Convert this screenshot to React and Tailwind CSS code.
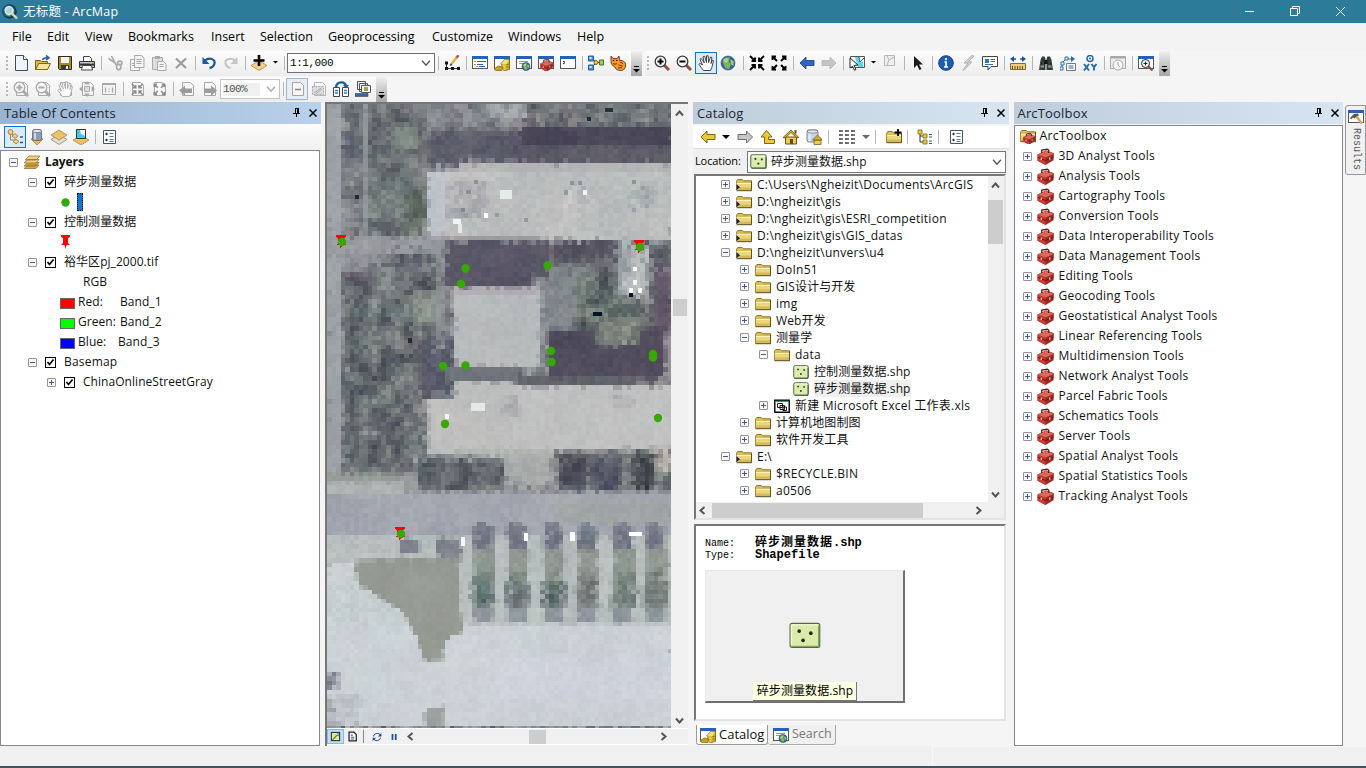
import React from 'react';

/* ---------- icons, all on a 16 x 16 grid ---------- */
const G = '#a9a9a9';
const win = (
  <>
    <rect x=".5" y="1.5" width="15" height="12" fill="#fff" stroke="#555" />
    <rect x="0" y="1" width="16" height="3" fill="#2463b4" />
  </>
);
const globe = (cx, cy, r) => (
  <>
    <circle cx={cx} cy={cy} r={r} fill="#2b66b5" stroke="#27456b" strokeWidth=".6" />
    <path d={`M${cx - r * 0.8} ${cy - r * 0.3}q${r * 0.5} ${-r * 0.6} ${r * 1.1} ${-r * 0.5}l${-r * 0.2} ${r * 0.6}l${r * 0.3} ${r * 0.5}l${-r * 0.3} ${r * 0.6}l${-r * 0.5} ${-r * 0.2}z`} fill="#83b54a" />
    <path d={`M${cx + r * 0.3} ${cy - r * 0.5}l${r * 0.5} ${r * 0.2}v${r * 0.7}l${-r * 0.4} ${-r * 0.2}z`} fill="#a6cc5c" />
    <circle cx={cx - r * 0.3} cy={cy - r * 0.4} r={r * 0.35} fill="#fff" fillOpacity=".35" />
  </>
);
const mag = (sign, c, h) => (
  <>
    <path d="M10 10l5 5" stroke={h} strokeWidth="3" />
    <circle cx="6.5" cy="6.5" r="5.300" fill="#f8f8f8" stroke={c} strokeWidth="1.3" />
    <path d={sign} stroke={c === G ? G : '#000'} strokeWidth="2" />
  </>
);
const PLUS = 'M3.5 6.5h6M6.5 3.5v6';
const MINUS = 'M3.5 6.5h6';
const hand = (c) => (
  <path d="M5.500 15.500L1 9.500l.8-1.200L4.500 10 2 4.300l1.300-.8L6.300 8 5 1.800 6.700 1.300 8.500 7.500V.8h1.700l.4 6.700L12.500 2l1.400.5L13 8.500l1.200-3.300 1.300.5-1.700 6.800-1.300 3z" fill="#fff" stroke={c} strokeWidth=".9" />
);
const arrowsIn = (c) => (
  <path d="M1 1l4 4M15 1l-4 4M1 15l4-4M15 15l-4-4M6 2.500v3.500H2.500M10 2.500v3.500h3.500M6 13.500v-3.500H2.500M10 13.500v-3.500h3.500" stroke={c} strokeWidth="1.9" fill="none" />
);
const arrowsOut = (c) => (
  <path d="M2 2l4 4M14 2l-4 4M2 14l4-4M14 14l-4-4M1.500 5V1.500H5M11 1.500h3.500V5M1.500 11v3.500H5M11 14.500h3.500V11" stroke={c} strokeWidth="1.9" fill="none" />
);
const page = (c) => <path d="M3.5 1.5h8l3 3v10h-11z" fill="#f8f8f8" stroke={c} />;
const toolbox = (
  <>
    <path d="M.5 6l8-4 7.500 3-.5 6.500L8 16l-7.500-4z" fill="#a32a24" />
    <path d="M.5 6l8-3.500L16 5.500 8 9z" fill="#d9695c" />
    <path d="M.5 6L8 9v7l-7.500-4z" fill="#c93d33" />
    <path d="M4.5 4.800V2l5-1 1.500 1v2.800" stroke="#571d19" fill="none" strokeWidth="1.2" />
    <path d="M.8 8.700l7.200 3 7.500-3" stroke="#701b17" fill="none" />
    <path d="M4 9.2v2M12 9v2" stroke="#eee" />
  </>
);
const folder = (
  <>
    <path d="M.5 12.500V4.300l1.300-1.800h4.500l1.200 1.300h8v8.700z" fill="#d9bd5c" stroke="#8f7620" />
    <path d="M.5 6h15v7H.5z" fill="#e9d67d" />
    <path d="M1 6.500h14" stroke="#fdf3bb" />
    <path d="M1 10.500h14v2.500H1z" fill="#d8ba55" />
    <path d="M.5 5v8.500" stroke="#a98d2e" />
    <path d="M.5 13.700h15.200V4.500" stroke="#4d4014" fill="none" />
  </>
);
const shp = (
  <>
    <rect x=".7" y="1.7" width="14.6" height="12.4" rx="1.6" fill="#dcecae" stroke="#5a7047" />
    <path d="M2 3h12" stroke="#f5fbdd" />
    <path d="M1.5 14.4h13.5V4" stroke="#3d5133" fill="none" strokeWidth=".8" />
    <path d="M4.3 5.5h1.6M10.3 6h1.6M7 10h1.7" stroke="#1b2a10" strokeWidth="1.6" />
  </>
);
const diamond = (y, c) => <path d={`M0 ${y}l8-5 8 5-8 5z`} fill={c} stroke="#a07c3c" strokeWidth=".7" />;
const cyl = (x, y, w, h, c) => (
  <>
    <rect x={x} y={y} width={w} height={h} rx="2" fill={c} stroke="#556" strokeWidth=".7" />
    <path d={`M${x + 2.5} ${y + 3}v${h - 4}`} stroke="#fff" strokeOpacity=".6" strokeWidth="2" />
    <ellipse cx={x + w / 2} cy={y + 1.5} rx={w / 2} ry="1.6" fill="#e8edf4" stroke="#556" strokeWidth=".6" />
  </>
);
const catalogWin = (
  <>
    {win}
    <path d="M7 8.500l4-4.500 4.500 1v9.500l-5.500 1.500z" fill="#d4ae22" stroke="#7a6412" strokeWidth=".7" />
    <path d="M7.500 8.500l3.500-4 4 1-3 4z" fill="#f6e27a" />
    <path d="M8 9.500l3.500.800v4.500l-2 .5z" fill="#e8cc4a" />
    <path d="M0 14l4-3 5 1-1 3.500H2z" fill="#c8a21f" stroke="#7a6412" strokeWidth=".7" />
    <path d="M12.500 9.500h2M12.500 12h2" stroke="#7a6412" strokeWidth=".8" />
  </>
);
const searchWin = (
  <>
    {win}
    <path d="M3 6.5h9M3 8.5h6" stroke="#8a9ab5" />
    {globe(10, 11.5, 4)}
  </>
);

const ICONS = {
  app: (<><circle cx="7.5" cy="7.5" r="7.2" fill="#17324a" />{globe(7, 7, 6)}<circle cx="7" cy="6.5" r="4" fill="#b6e3f0" fillOpacity=".75" stroke="#ecf5f8" /><path d="M10 9.5l5 5" stroke="#e6dcb4" strokeWidth="2.4" /></>),
  new: (<><path d="M2.5.5h8l4 4v11h-12z" fill="#eff5fd" stroke="#3f4b5c" /><path d="M10.5.5v4h4" fill="#fff" stroke="#3f4b5c" /></>),
  open: (<><path d="M.5 14.5v-9h5l1 1h6v8z" fill="#d9b84b" stroke="#7d641a" /><path d="M.7 14.5l3-6H15.5l-3 6z" fill="#f5e498" stroke="#7d641a" /><path d="M7.5 5c1-2.500 3-2.500 5-2.300M11 .5l3 2.300-3 2.200" stroke="#1f5c93" strokeWidth="1.5" fill="none" /></>),
  save: (<><path d="M1.500 1.500h13v13h-12l-1-1z" fill="#a58a2c" stroke="#2b2a20" /><path d="M4 2h8v6H4z" fill="#f3f3f3" /><path d="M4 10h8v5H4z" fill="#3a3a3a" /><path d="M9 11h2v3H9z" fill="#eee" /></>),
  print: (<><path d="M4.500 6V1.500h6l2 2V6" fill="#fff" stroke="#444" /><path d="M.5 6.500h15v6H.5z" fill="#c2c8cf" stroke="#333" /><path d="M1 9.500h14" stroke="#333" strokeWidth="2" /><path d="M3.500 10.500h9l1 4.500h-11z" fill="#fff" stroke="#444" /><path d="M11 8h2" stroke="#d6c634" strokeWidth="1.500" /></>),
  cut: <path d="M4.500 1l4.500 9M1.500 3.500L9 8.500M9.500 12a2 2.300 0 1 0 4.500 0a2 2.300 0 1 0-4.500 0M10.500 8a1.800 1.500 0 1 0 4.500 0a1.800 1.500 0 1 0-4.500 0" stroke={G} strokeWidth="1.600" fill="none" />,
  copy: (<><path d="M1.500 4.500h7l2 2v9h-9z" fill="#f4f4f4" stroke={G} /><path d="M5.500.5h7l2.500 2.500v9.500H5.500z" fill="#f4f4f4" stroke={G} /><path d="M7.500 4.500h5M7.500 6.500h5M7.500 8.500h5M3 8.500h2M3 10.500h2" stroke={G} /></>),
  paste: (<><path d="M1.500 2.500h10v12h-10z" fill="#ddd" stroke={G} /><path d="M4 1h5v3H4z" fill={G} /><path d="M6.500 6.500h6l2.500 2.500v6.500H6.500z" fill="#f4f4f4" stroke={G} /><path d="M8.500 9.500h4M8.500 11.500h4" stroke={G} /></>),
  del: <path d="M3 3.500l10 9.500M13 3.500L3 13" stroke="#9e9e9e" strokeWidth="2.400" />,
  undo: (<><path d="M4 5.500C8 2 14.500 4 13.500 8.500c-.6 2.500-2.500 4-5 4.500" fill="none" stroke="#22589a" strokeWidth="2.300" /><path d="M1.500 2v7h7z" fill="#22589a" /></>),
  redo: (<><path d="M12 5.500C8 2 1.500 4 2.500 8.500c.6 2.500 2.500 4 5 4.500" fill="none" stroke="#c4c4c4" strokeWidth="2" /><path d="M14.500 2v7h-7z" fill="#c4c4c4" /></>),
  add: (<>{diamond(10.5, '#f0cf87')}<path d="M8 0v11M2.500 5.500h11" stroke="#000" strokeWidth="2.600" /></>),
  edit: (<><path d="M2 13.500h12M2.500 8l0 5" stroke="#333" /><path d="M1 6.500h3v3H1zM1 12h3v3H1zM7 12h3v3H7zM13 12h3v3h-3z" fill="#111" /><path d="M7 9.500l6-7.500" stroke="#dfb546" strokeWidth="2.600" /><path d="M12.500 2.700l2-2.500" stroke="#c4524a" strokeWidth="2.600" /><path d="M6.300 10.500l1.200-1.500" stroke="#333" strokeWidth="1.500" /></>),
  tocw: (<>{win}<path d="M2 6.500h2M2 9.500h2M4 11.500h2" stroke="#c88b28" /><path d="M5 6.500h9M5 9.500h6M7 11.500h6" stroke="#2463b4" /></>),
  catw: catalogWin,
  srchw: searchWin,
  toolw: (<>{win}<g transform="translate(2 3.500) scale(.82)">{toolbox}</g></>),
  pyw: (<>{win}<path d="M3 6l2 1.500L3 9" stroke="#111" fill="none" /></>),
  model: (<><path d="M3 3l5 4M3 13l5-5M10 7.500h2" stroke="#222" /><path d="M.5 1h5v5h-5zM.5 10h5v5h-5z" fill="#4b91d4" stroke="#245d9b" /><path d="M1.500 2h2v2h-2zM1.500 11h2v2h-2z" fill="#dcecfa" /><circle cx="8" cy="7.500" r="2" fill="#ecc83c" stroke="#76641f" /><path d="M11.500 5h4v5h-4z" fill="#a3c863" stroke="#4b6f23" /></>),
  cat: (<><path d="M1 1l2 2.500h4L9 1l.8 4.500C14 5 16 8 15.500 11c0 2.500-2 4.500-5 4.500S5.500 14.500 5 12C2.500 11 1 9 1 6z" fill="#f6982a" stroke="#6d3305" strokeWidth=".9" /><path d="M10 7l3 1.500M8.500 10l4 1M8 13l4-.5M3 8.500q2 1.500 4 0" stroke="#6d3305" fill="none" /><path d="M2.800 5.500h1.500M6 5.500h1.500" stroke="#200" /></>),
  zin: mag(PLUS, '#3b3b3b', '#934c3a'),
  zout: mag(MINUS, '#3b3b3b', '#934c3a'),
  hand: hand('#333'),
  globe: globe(8, 8, 7),
  fin: arrowsIn('#000'),
  fout: arrowsOut('#000'),
  back: <path d="M1 8l6-6v3.500h8v5H7V14z" fill="#2d63cc" stroke="#193c83" strokeWidth=".8" />,
  fwd: <path d="M15 8L9 2v3.500H1v5h8V14z" fill="#c5c5c5" stroke="#b2b2b2" strokeWidth=".8" />,
  selF: (<><path d="M1.500 1.500h14v11h-14z" fill="#fff" stroke="#555" /><path d="M6 2h4l1 4 3 1v5H9L7 6z" fill="#57d8ec" /><path d="M10 2l1 5 4-4" stroke="#555" fill="none" /><path d="M1 3l8 7-4 .5 2 4-1.500.800-2-4L1 13z" fill="#fff" stroke="#111" strokeWidth=".9" /></>),
  clr: (<><path d="M2.500.5h10v10h-10z" fill="#f0f0f0" stroke="#b8b8b8" /><path d="M5 1l2 4-2 5M7 5l5-3" stroke="#b8b8b8" fill="none" /></>),
  ptr: <path d="M4 1v12l3-3 2.500 5 2-1L9 9.500h4z" fill="#1c1c1c" />,
  info: (<><circle cx="8" cy="8" r="7.300" fill="#1f5db5" stroke="#143d7d" /><path d="M8 3v2.200M6.500 7H8v5M6 12h4" stroke="#fff" strokeWidth="1.700" fill="none" /></>),
  bolt: <path d="M12 .5L4 8h4l-5 7.500L12 7H8l6-6z" fill="#d4d4d4" stroke="#b0b0b0" />,
  popup: (<><path d="M.5 1.500h15v10H9L6 15v-3.500H.5z" fill="#fff" stroke="#444" /><path d="M3 4h4v4H3z" fill="#2c78bd" /><path d="M8.500 4.500H13M8.500 6.500H13M3 9.500h8" stroke="#2c78bd" /></>),
  meas: (<><path d="M0 4l4-3v2.300h2v1.400H4V7zM16 4l-4-3v2.300h-2v1.400h2V7z" fill="#1b5599" /><path d="M.5 8.500h15v6H.5z" fill="#efcb84" stroke="#8b6a2d" /><path d="M2.500 11v3M5 11v3M7.500 11v3M10 11v3M12.500 11v3" stroke="#6b4d18" /></>),
  bino: (<><path d="M1 15L2.500 5 4 1.500h2.500L7.500 4v11zM15 15L13.500 5 12 1.500H9.500L8.500 4v11z" fill="#343a38" /><path d="M6.500 5h3v4h-3z" fill="#111" /><path d="M2.500 11.500h3.500M10 11.500h3.500" stroke="#829c91" strokeWidth="2" /></>),
  route: (<><path d="M2 13V8l4-4h6" stroke="#2a6ca8" fill="none" /><path d="M11 1l4 3-4 3z" fill="#2a6ca8" /><path d="M1 7h3v3H1zM0 12h3v3H0zM5 2h3v3H5z" fill="#fff" stroke="#2a6ca8" /><path d="M6.500 8.500h9v7h-9z" fill="#fff" stroke="#777" /><path d="M8.500 11h5M8.500 13h5" stroke="#2a6ca8" /></>),
  xy: (<><circle cx="8" cy="3.500" r="3" fill="none" stroke="#2369a8" strokeWidth="1.500" /><circle cx="8" cy="3.500" r="1" fill="#2369a8" /><path d="M2 9l5 6.500M7 9l-5 6.500M9.500 9l2.500 3.300L14.500 9M12 12v3.500" stroke="#2369a8" strokeWidth="1.900" fill="none" /></>),
  time: (<><path d="M.5 1.500h15v12H.5z" fill="#eee" stroke={G} /><path d="M1 2.500h14" stroke={G} strokeWidth="2" /><circle cx="8" cy="10" r="5" fill="#f5f5f5" stroke={G} /><path d="M8 7v3l2 2" stroke={G} fill="none" /></>),
  viewer: (<>{win}<path d="M10 11l4.500 4.500" stroke="#934c3a" strokeWidth="2.200" /><circle cx="7.500" cy="8.500" r="4" fill="#fff" stroke="#222" /><path d="M5.500 8.500h4M7.500 6.500v4" stroke="#222" /></>),
  pzin: (<>{page(G)}{mag(PLUS, G, G)}</>),
  pzout: (<>{page(G)}{mag(MINUS, G, G)}</>),
  phand: (<>{page(G)}{hand(G)}</>),
  pfull: (<>{page(G)}<path d="M5.500 5.500h5v5h-5z" fill="#ddd" stroke={G} /><path d="M8 0l3 3.500H5zM8 16l3-3.500H5zM0 8l3.500-3v6zM16 8l-3.500-3v6z" fill={G} /></>),
  one: (<><path d="M1.500 2.500h13v11h-13z" fill="#f4f4f4" stroke={G} /><path d="M1 3h14" stroke={G} strokeWidth="2" /><path d="M4.500 6.500v5M11.500 6.500v5M8 7.500v1M8 10v1" stroke={G} strokeWidth="1.300" /></>),
  pin: (<>{page(G)}<g transform="translate(2 2) scale(.8)">{arrowsIn('#8c8c8c')}</g></>),
  pout: (<>{page(G)}<g transform="translate(2 2) scale(.8)">{arrowsOut('#8c8c8c')}</g></>),
  pback: (<>{page(G)}<path d="M0 9.500l6-5v3h7v4.500H6v3z" fill="#9c9c9c" /></>),
  pfwd: (<>{page(G)}<path d="M16 9.500l-6-5v3H3V12h7v3z" fill="#9c9c9c" /></>),
  draft: (<>{page('#a5a5a5')}<path d="M6 8.500h6" stroke="#888" strokeWidth="1.500" /></>),
  focus: (<>{page('#b5b5b5')}<path d="M1.500 5.500h11v8h-11z" fill="#ddd" stroke={G} strokeDasharray="2 1" /><path d="M3 12l7-5M5 13l6-5" stroke={G} /></>),
  swap: (<><path d="M.5 6.500h6v9h-6zM9.500 6.500h6v9h-6z" fill="#fff" stroke="#444" /><path d="M3 6C4 0 12 0 13 5" stroke="#1d5c9b" strokeWidth="2.400" fill="none" /><path d="M2 9.500h3M2 12h3M11 9.500h3M11 12h3" stroke="#3b7cb5" strokeWidth="1.500" /><path d="M10 4h6l-3 3.500z" fill="#1d5c9b" /></>),
  ddp: (<><path d="M2.500.5h8v8h-8zM4.500 2.500h8v8h-8z" fill="#eee" stroke="#555" /><path d="M6.500 4.500h9v7h-9z" fill="#fff" stroke="#555" /><path d="M9 6h4v4H9z" fill="#91a957" /><path d="M0 12.500h13v3H0z" fill="#286ca9" stroke="#444" strokeWidth=".6" /></>),
  byorder: (<><path d="M3.500 4v7h5M5 5l3 2" stroke="#888" fill="none" /><circle cx="3.500" cy="3" r="2.500" fill="#f1cc7b" stroke="#9b7632" strokeWidth=".8" /><path d="M8 4.500l3 2.500-3 2.500L5 7zM9 10l3 2.500L9 15l-3-2.500z" fill="#f1cc7b" stroke="#9b7632" strokeWidth=".8" /><path d="M13 8h3M13 13.500h3" stroke="#1c5d9e" strokeWidth="1.600" /></>),
  bysource: (<>{<path d="M2 10l6-2 6 2-6 6z" fill="#e7bc5e" stroke="#997230" strokeWidth=".7" />}{cyl(3.5, 0.5, 9, 11, '#8d9cb5')}</>),
  byvis: (<>{diamond(10.5, '#ddd')}{diamond(6, '#ecc16a')}</>),
  bysel: (<>{diamond(11, '#ecc16a')}<path d="M3.500.5h9v9h-9z" fill="#3ecbe3" stroke="#333" /><path d="M7 1l1 4 4 2V1z" fill="#fff" /></>),
  opts: (<><path d="M2.500 1.500h12v13h-12z" fill="#fff" stroke="#42566e" /><path d="M4 5h3M4 11h3M5.500 3.700v2.500M5.500 9.700v2.500" stroke="#333" /><path d="M8.500 4.500h4M8.500 7.500h4M8.500 10.500h4M8.500 12.500h4" stroke="#5c7896" /></>),
  layers: (<><path d="M0 12l4-3.500h11L12 12zM0 14.500L4 11h11l-3 3.500z" fill="#dca946" stroke="#8c6726" strokeWidth=".7" /><path d="M0 9l4-3.500h11L12 9zM1 6l4-4h11l-4 4z" fill="#f4cf83" stroke="#8c6726" strokeWidth=".7" /></>),
  gold: <path d="M1 8l6-6v3.500h8v5H7V14z" fill="#edc935" stroke="#7c6515" />,
  grayr: <path d="M15.500 8l-6-6v3.500H1v5h8.500V14z" fill="#c7c7c7" stroke="#6d6d6d" />,
  up: <path d="M6.500 1.500L1 8h3.500v6.500h10v-4h-6V8H12z" fill="#edc935" stroke="#7c6515" />,
  home: (<><path d="M2.500 8h11v7h-11z" fill="#e9c957" stroke="#6b5113" /><path d="M0 8.500L8 1l8 7.500-2 .5-6-5.500L2 9z" fill="#d7a921" stroke="#6b5113" strokeWidth=".8" /><path d="M7 10h3v5H7z" fill="#6b4616" /><path d="M12.500 1v3.500" stroke="#6b5113" strokeWidth="2" /></>),
  dbhome: (<>{cyl(1, 1, 11, 12, '#c7d6e8')}<path d="M8 11h7v4.500H8z" fill="#e9c957" stroke="#6b5113" strokeWidth=".7" /><path d="M6.500 11l5-5 5 5z" fill="#d7a921" stroke="#6b5113" strokeWidth=".7" /></>),
  list: (<><path d="M0 2h4M0 6h4M0 10h4M0 14h4M6 2h4M6 6h4M6 10h4M6 14h4M12 2h4M12 6h4M12 10h4M12 14h4" stroke="#777" strokeWidth="1.800" /><path d="M1 .5v15M7 .5v15M13 .5v15" stroke="#333" strokeWidth="1" strokeDasharray="1 3" strokeDashoffset="-1" /></>),
  connect: (<>{folder}<path d="M12 0v7M8.500 3.500h7" stroke="#000" strokeWidth="1.800" /></>),
  tree: (<><path d="M3 4v9h3M3 7h3" stroke="#333" fill="none" /><path d="M1 1h4v4H1zM6 5h4v4H6zM6 11h4v4H6z" fill="#edc935" stroke="#7c6515" strokeWidth=".8" /><path d="M12 5.500h3M12 8h3M12 12h3M12 14.500h3" stroke="#235e9e" strokeWidth="1.200" /></>),
  folder,
  fconn: (<>{folder}<path d="M0 6.500l4.500 3.700L0 14z" fill="#222" stroke="#fff" strokeWidth=".5" /></>),
  shp,
  xls: (<><path d="M.8 2.300h14.400v11.900H.8z" fill="#fff" stroke="#000" strokeWidth="1.400" /><path d="M1.500 3.200h13" stroke="#147a38" strokeWidth="1.200" /><path d="M3.500 5.500h5v4h-5zM6 7.500h4.500v4H6zM9 9h3.500v3.500H9z" fill="#fff" stroke="#000" strokeWidth=".9" /></>),
  toolbox,
  toolroot: (<>{folder}<g transform="translate(3 4.500) scale(.76)">{toolbox}</g></>),
  hammer: (<>{win}<path d="M8 7l6 7.500" stroke="#d5a766" strokeWidth="2.500" /><path d="M2 9l4-4 4-.5 1 2-3 1-1 2-2-1-2 2z" fill="#555" /></>),
  mapv: (<><rect x="2" y="2" width="12" height="12" fill="#e0e9a4" stroke="#333" strokeWidth="1.600" /><path d="M4 13l5-6 4-1" stroke="#58923c" strokeWidth="2" fill="none" /><path d="M10 4h3" stroke="#5aa4c9" strokeWidth="2" /></>),
  layout: (<><path d="M3 1.500h7l3.500 3.500v9.500H3z" fill="#fff" stroke="#222" strokeWidth="1.800" /><path d="M5.500 6h3M5.500 9h5M5.500 11.500h5" stroke="#33658f" strokeWidth="1.500" /></>),
  refresh: (<><path d="M2.500 7c1-6 9-6 11-2M13.500 9c-1 6-9 6-11 2" stroke="#194c87" strokeWidth="1.600" fill="none" /><path d="M15 1.500v5.500H9.500zM1 14.500V9h5.500z" fill="#194c87" /></>),
  pause: <path d="M5 2v12M11.500 2v12" stroke="#1d4f9f" strokeWidth="3.500" />,
};

function Ic({ n, s = 16, className = '' }) {
  return (
    <svg viewBox="0 0 16 16" width={s} height={s} fill="none" className={`shrink-0 ${className}`}>
      {ICONS[n]}
    </svg>
  );
}

const Btn = ({ n, on }) => (
  <div className={`flex h-[22px] w-[22px] shrink-0 items-center justify-center ${on ? 'border border-[#0078d7] bg-[#dceaf5]' : ''}`}>
    <Ic n={n} />
  </div>
);
const Sep = () => (
  <div className="flex w-[6px] shrink-0 justify-center">
    <div className="h-[14px] w-px bg-[#b5b5b5]" />
  </div>
);
const Grip = () => (
  <div className="ml-[6px] mr-[2px] flex w-[2px] shrink-0 flex-col gap-[2px]">
    {[0, 1, 2, 3].map((i) => <div key={i} className="h-[2px] w-[2px] bg-[#b7b7b7]" />)}
  </div>
);
const Drop = ({ c = '#000', s = 5 }) => (
  <div className="flex w-[10px] shrink-0 justify-center">
    <svg width={s} height="4"><path d={`M0 0h${s}L${s / 2} ${s / 2}z`} fill={c} /></svg>
  </div>
);
const More = () => (
  <div className="flex h-full w-[11px] shrink-0 items-end justify-center bg-gradient-to-b from-[#f0f0f0] to-[#a6a6a6] pb-[3px]">
    <svg width="7" height="7"><path d="M1 .5h5" stroke="#000" /><path d="M0 3h7L3.500 6.500z" fill="#000" /></svg>
  </div>
);
const Chev = ({ d = 'down', w = 9, c = '#555', sw = 2 }) => (
  <svg width={w} height={w} viewBox="0 0 9 9" fill="none" stroke={c} strokeWidth={sw} className="shrink-0">
    <path d={{ down: 'M1 2.500l3.500 4L8 2.500', up: 'M1 6.500l3.500-4L8 6.500', left: 'M6.500 1l-4 3.500 4 3.500', right: 'M2.500 1l4 3.500-4 3.500' }[d]} />
  </svg>
);
const Exp = ({ open }) => (
  <svg width="9" height="9" className="shrink-0">
    <rect x=".5" y=".5" width="8" height="8" rx=".5" fill="#f8f8f8" stroke="#959595" />
    <path d={open ? 'M2 4.500h5' : 'M2 4.500h5M4.500 2v5'} stroke="#3b5b9c" />
  </svg>
);
const Check = () => (
  <svg width="11" height="11" className="shrink-0">
    <rect x=".5" y=".5" width="10" height="10" fill="#fff" stroke="#000" />
    <path d="M2.500 5l2 2.500 4-5" fill="none" stroke="#000" strokeWidth="1.700" />
  </svg>
);
const Head = ({ title, active }) => (
  <div className={`flex h-[22px] shrink-0 items-center pl-[4px] pr-[4px] pt-px ${active ? 'bg-gradient-to-r from-[#99b4d1] to-[#b9d1ea]' : 'bg-gradient-to-r from-[#bfcddb] to-[#d7e4f2]'}`}>
    <span className="flex-1 text-[13px] tracking-[.17px] text-[#1b2433]">{title}</span>
    <svg width="8" height="9" className="mb-[3px] mr-[8px]" fill="none" stroke="#000" shapeRendering="crispEdges">
      <path d="M2.500 0v5M2 .5h4M0 5.500h7M3.500 6v3" /><path d="M5 0v5" strokeWidth="2" />
    </svg>
    <svg width="8" height="8" className="mb-[2px]" stroke="#000" strokeWidth="1.500"><path d="M.5.5l7 7M7.500.5l-7 7" /></svg>
  </div>
);

/* ---------- aerial imagery: terrain patches with per-cell grain ---------- */
const CELL = 4.54;
// x0, y0, x1, y1 in view coordinates, base colour, grain, smooth variation
const PATCHES = [
  [0, 0, 345, 624, 116, 120, 124, 16, 10],
  [0, 0, 14, 440, 156, 161, 165, 5, 5],
  [35, 0, 40, 130, 145, 150, 154, 5, 4],
  [14, 25, 32, 55, 95, 99, 112, 9, 6],
  [40, 8, 101, 130, 108, 114, 116, 14, 15],
  [66, 20, 92, 46, 132, 142, 136, 9, 6],
  [78, 86, 101, 130, 98, 106, 100, 11, 6],
  [101, 0, 345, 22, 132, 135, 141, 14, 12],
  [160, 2, 200, 12, 166, 168, 172, 7, 5],
  [198, 0, 345, 24, 116, 120, 123, 17, 6],
  [105, 25, 200, 62, 94, 94, 108, 7, 12],
  [99, 30, 120, 66, 92, 98, 108, 9, 7],
  [195, 22, 345, 42, 75, 72, 89, 5, 5],
  [200, 42, 345, 59, 94, 93, 104, 6, 6],
  [101, 66, 345, 136, 188, 190, 190, 6, 5],
  [130, 59, 345, 68, 181, 181, 182, 4, 3],
  [101, 68, 119, 136, 188, 194, 200, 4, 3],
  [120, 78, 160, 114, 177, 181, 182, 12, 5],
  [237, 78, 267, 106, 180, 184, 185, 11, 5],
  [300, 78, 330, 106, 181, 185, 185, 11, 5],
  [0, 130, 119, 156, 151, 155, 159, 7, 7],
  [14, 152, 115, 392, 105, 111, 114, 18, 15],
  [14, 148, 56, 168, 140, 144, 149, 8, 6],
  [18, 166, 50, 182, 96, 96, 108, 10, 8],
  [70, 148, 96, 166, 84, 88, 102, 12, 6],
  [86, 188, 118, 218, 136, 150, 141, 8, 8],
  [94, 230, 130, 293, 88, 90, 105, 8, 6],
  [110, 136, 120, 245, 139, 146, 148, 7, 5],
  [120, 132, 222, 142, 158, 156, 161, 5, 4],
  [120, 138, 221, 183, 89, 86, 102, 5, 5],
  [206, 172, 232, 265, 135, 140, 145, 9, 6],
  [221, 137, 345, 242, 108, 111, 116, 13, 14],
  [225, 135, 291, 153, 88, 84, 98, 8, 7],
  [222, 160, 250, 230, 127, 133, 137, 8, 8],
  [248, 172, 318, 244, 104, 112, 110, 19, 16],
  [290, 134, 304, 192, 161, 170, 172, 13, 8],
  [302, 141, 322, 193, 184, 188, 187, 8, 5],
  [328, 140, 345, 160, 84, 88, 94, 8, 5],
  [328, 160, 345, 235, 102, 90, 108, 7, 10],
  [128, 183, 213, 263, 184, 187, 188, 4, 3],
  [128, 183, 208, 191, 177, 173, 179, 3, 3],
  [222, 226, 345, 274, 83, 79, 95, 5, 9],
  [270, 213, 311, 242, 115, 122, 116, 16, 7],
  [338, 228, 345, 272, 147, 145, 151, 6, 4],
  [120, 263, 190, 277, 112, 116, 123, 4, 5],
  [190, 273, 310, 284, 98, 99, 105, 6, 4],
  [128, 278, 188, 350, 190, 191, 190, 4, 3],
  [101, 293, 345, 350, 190, 191, 190, 4, 3],
  [188, 282, 345, 350, 191, 192, 192, 4, 3],
  [172, 292, 196, 314, 182, 184, 184, 11, 3],
  [285, 292, 306, 304, 176, 176, 180, 9, 4],
  [128, 344, 345, 363, 179, 181, 179, 6, 4],
  [0, 370, 84, 384, 150, 155, 151, 6, 5],
  [84, 352, 175, 388, 151, 156, 157, 9, 6],
  [92, 352, 176, 390, 98, 103, 109, 14, 9],
  [176, 352, 229, 384, 166, 168, 168, 7, 5],
  [228, 345, 330, 386, 128, 131, 130, 10, 8],
  [230, 351, 258, 392, 84, 87, 98, 12, 7],
  [265, 351, 294, 388, 80, 84, 99, 11, 7],
  [305, 350, 329, 386, 77, 80, 85, 12, 7],
  [329, 341, 345, 370, 185, 185, 176, 9, 4],
  [0, 378, 76, 392, 176, 180, 181, 5, 4],
  [76, 388, 345, 396, 158, 163, 166, 5, 4],
  [0, 392, 345, 433, 162, 166, 176, 5, 5],
  [228, 397, 345, 420, 160, 165, 166, 4, 4],
  [0, 432, 345, 522, 183, 190, 189, 6, 4],
  [0, 459, 80, 624, 199, 206, 207, 6, 3],
  [25, 448, 70, 459, 192, 195, 195, 4, 3],
  [73, 434, 92, 450, 122, 128, 140, 6, 5],
  [110, 434, 135, 459, 133, 137, 145, 8, 7],
  [0, 520, 345, 624, 202, 209, 213, 4, 3],
  [170, 555, 345, 597, 205, 210, 219, 4, 3],
  [98, 603, 116, 624, 154, 161, 159, 4, 3],
  [0, 569, 12, 584, 147, 154, 163, 10, 5],
  [0, 590, 32, 620, 190, 194, 199, 8, 4],
];
const COLUMNS = [144, 178, 214, 248, 284, 316];
COLUMNS.forEach((a, k) => {
  const b = a + 25;
  PATCHES.push(
    [a + 2, 424, b - 3, 446, 112, 118, 131, 8, 7],
    [a + 4, 419, b - 8, 426, 122, 127, 141, 6, 5],
    [a + 3, 446, b - 2, 470, 144, 152, 147, 6, 6],
    [a + 3, 466, b - 2, 478, 130, 140, 133, 10, 6],
    [a, 478, b, 504, k > 2 ? 122 : 112, k > 2 ? 129 : 124, 126, 10, 8],
    [a + 7, 476, b - 8, 500, k > 2 ? 108 : 90, k > 2 ? 118 : 106, k > 2 ? 116 : 102, 12, 7],
    [a + 3, 502, b - 3, 518, 142, 150, 157, 6, 5],
  );
});
const SPECKS = [
  [134, 433, 4, 9, '#f6f8fa'], [197, 429, 4, 8, '#fff'], [243, 428, 5, 9, '#fcfdfd'], [302, 428, 13, 4, '#fff'],
  [173, 86, 12, 9, '#e6eae9'], [157, 109, 4, 5, '#fff'], [126, 115, 8, 5, '#f0f3f3'], [256, 86, 4, 5, '#f3f5f5'],
  [131, 120, 4, 9, '#e5e9e8'], [144, 299, 14, 8, '#e6e8e8'], [118, 310, 4, 5, '#f4f4f4'], [306, 163, 4, 4, '#fff'], [306, 176, 4, 5, '#f4f8f6'],
  [302, 184, 4, 5, '#fff'], [311, 184, 4, 5, '#fff'], [302, 189, 4, 4, '#08152b'], [266, 208, 9, 4, '#071428'],
  [28, 91, 4, 4, '#222a3e'], [278, 4, 8, 4, '#253143'], [260, 13, 4, 4, '#202c40'], [81, 234, 4, 5, '#1f2f36'],
  [139, 86, 5, 4, '#888f99'], [147, 76, 4, 4, '#8a929b'], [134, 104, 4, 4, '#7f8892'], [243, 77, 4, 4, '#8e959f'], [251, 77, 4, 4, '#8e959f'],
  [237, 86, 4, 5, '#949aa2'], [305, 76, 4, 4, '#8e949a'], [314, 82, 4, 4, '#989da4'], [305, 104, 4, 4, '#9aa0a6'], [197, 114, 4, 4, '#92999f'], [168, 109, 4, 4, '#949aa3'],
];
const hash = (x, y) => {
  let h = (x * 374761393 + y * 668265263) | 0;
  h = Math.imul(h ^ (h >>> 13), 1274126177);
  return (((h ^ (h >>> 16)) >>> 0) % 10000) / 10000 - 0.5;
};
const smooth = (x, y, s) => {
  const fx = x / s, fy = y / s, ix = Math.floor(fx), iy = Math.floor(fy), u = fx - ix, v = fy - iy;
  return (hash(ix, iy) * (1 - u) + hash(ix + 1, iy) * u) * (1 - v) + (hash(ix, iy + 1) * (1 - u) + hash(ix + 1, iy + 1) * u) * v;
};
const GRASS = [[28, 455], [130, 455], [135, 528], [116, 538], [116, 557], [98, 557], [88, 531], [76, 510], [60, 498], [31, 480]];
const GRASS_PATCH = [0, 0, 0, 0, 149, 153, 147, 2.5, 5];
const inside = (px, py, pts) => {
  let r = false;
  for (let i = 0, j = pts.length - 1; i < pts.length; j = i++) {
    const [xi, yi] = pts[i], [xj, yj] = pts[j];
    if (yi > py !== yj > py && px < ((xj - xi) * (py - yi)) / (yj - yi) + xi) r = !r;
  }
  return r;
};
const patchAt = (x, y) => {
  if (inside(x, y, GRASS)) return GRASS_PATCH;
  for (let k = PATCHES.length - 1; k > 0; k--) {
    const q = PATCHES[k];
    if (x >= q[0] && x < q[2] && y >= q[1] && y < q[3]) return q;
  }
  return PATCHES[0];
};
const cells = [];
for (let j = 0; j * CELL < 624; j++) {
  for (let i = 0; i * CELL < 345; i++) {
    const cx = (i + 0.5) * CELL, cy = (j + 0.5) * CELL;
    const p = patchAt(cx, cy);
    // rough-edged cover (trees, shade) bleeds into its neighbours
    const reach = p[7] >= 7 ? 15 : 5;
    const near = [
      patchAt(cx + hash(i + 301, j) * reach, cy + hash(i, j + 401) * reach),
      patchAt(cx + hash(i + 77, j) * reach, cy + hash(i, j + 55) * reach),
    ];
    const mix = (k) => p[k] * 0.4 + near[0][k] * 0.3 + near[1][k] * 0.3;
    const grain = mix(7), vary = mix(8);
    const clump = grain > 9 ? 3.4 : 1.3;
    const d = hash(i, j) * grain * 1.9 + smooth(i + 50, j, 2.4) * grain * clump + smooth(i, j + 99, 6) * vary * 1.8;
    const t = smooth(i + 7, j + 31, 4) * Math.min(grain, 10) * 0.9;
    cells.push([i, j, `rgb(${Math.round(mix(4) + d - t)},${Math.round(mix(5) + d + t / 2)},${Math.round(mix(6) + d * 0.85)})`]);
  }
}
const DOTS = [[138.5, 164.5], [134, 180], [220.5, 161.5], [116, 262], [138.5, 261.5], [224, 247], [224.5, 258], [326, 250], [326, 253.5], [118, 320], [331, 314], [15, 138], [313, 143], [74, 430]];
const PINS = [[14, 131], [312, 136], [73, 423]];

const Imagery = () => (
  <svg width="344" height="624" viewBox="0 0 344 624" className="block shrink-0" shapeRendering="crispEdges">
    {cells.map(([i, j, c]) => <rect key={i * 1000 + j} x={i * CELL} y={j * CELL} width={CELL} height={CELL} fill={c} />)}
    {SPECKS.map(([x, y, w, h, c], k) => <rect key={k} x={x} y={y} width={w} height={h} fill={c} />)}
    {PINS.map(([x, y], k) => <path key={k} d={`M${x - 5} ${y}h10v2l-2 1v5l2 2h-4l-1 5-1-5h-4l2-2v-5l-2-1z`} fill="#f00" />)}
    {DOTS.map(([x, y], k) => <circle key={k} cx={x} cy={y} r="4.200" fill="#37a800" shapeRendering="auto" />)}
  </svg>
);

/* ---------- panels ---------- */
const Row = ({ children, pl }) => <div className={`flex h-5 shrink-0 items-center whitespace-pre ${pl}`}>{children}</div>;
const Band = ({ c, a, b, w }) => (
  <Row pl="pl-[59px]">
    <span className={`mr-[3px] mt-[3px] h-[11px] w-[15px] border border-[#666] ${c}`} />
    <span className={w}>{a}</span><span>{b}</span>
  </Row>
);

function Contents() {
  return (
    <div className="flex w-[321px] flex-col tracking-[.05px]">
      <Head title="Table Of Contents" active />
      <div className="flex h-[26px] items-center bg-gradient-to-b from-[#fdfdfd] to-[#efefef] pl-[4px]">
        <Btn n="byorder" on /><Btn n="bysource" /><Btn n="byvis" /><Btn n="bysel" />
        <Sep /><Btn n="opts" />
      </div>
      <div className="flex w-[320px] flex-1 flex-col border border-[#828790] bg-white pt-[1px]">
        <Row pl="pl-[8px]"><Exp open /><Ic n="layers" className="ml-[6px] mr-[5px]" /><b className="font-bold tracking-[-.1px]">Layers</b></Row>
        <Row pl="pl-[27px]"><Exp open /><span className="ml-[8px] mr-[8px]"><Check /></span>碎步测量数据</Row>
        <Row pl="pl-[60px]">
          <svg width="9" height="9" className="mr-[7px]"><circle cx="4.500" cy="4.500" r="4.200" fill="#37a800" /></svg>
          <span className="h-[18px] w-[6px] border border-dotted border-black bg-[#0078d7]" />
        </Row>
        <Row pl="pl-[27px]"><Exp open /><span className="ml-[8px] mr-[8px]"><Check /></span>控制测量数据</Row>
        <Row pl="pl-[60px]"><svg width="9" height="14"><path d="M0 0h9v2L7 3v5l2 2H5.500L4.500 14l-1-4H0l2-2V3L0 2z" fill="red" /></svg></Row>
        <Row pl="pl-[27px]"><Exp open /><span className="ml-[8px] mr-[8px]"><Check /></span>裕华区pj_2000.tif</Row>
        <Row pl="pl-[82px]"><span className="tracking-[.1px]">RGB</span></Row>
        <Band c="bg-[#ff0000]" a="Red:" b="Band_1" w="w-[42px]" />
        <Band c="bg-[#00ff00]" a="Green:" b="Band_2" w="w-[42px]" />
        <Band c="bg-[#0000ff]" a="Blue:" b="Band_3" w="w-[40px]" />
        <Row pl="pl-[27px]"><Exp open /><span className="ml-[8px] mr-[8px]"><Check /></span><span className="tracking-[.2px]">Basemap</span></Row>
        <Row pl="pl-[46px]"><Exp /><span className="ml-[8px] mr-[8px]"><Check /></span>ChinaOnlineStreetGray</Row>
      </div>
    </div>
  );
}

function MapView() {
  return (
    <div className="ml-[4px] flex w-[364px] flex-col border-l-2 border-t-2 border-[#777] bg-[#f0f0f0]">
      <div className="flex h-[624px] shrink-0">
        <Imagery />
        <div className="ml-[2px] flex w-[14px] flex-col items-center bg-[#f0f0f0] pb-[3px] pt-[5px]">
          <Chev d="up" />
          <div className="mt-[181px] h-[17px] w-[14px] bg-[#cdcdcd]" />
          <div className="flex-1" />
          <Chev d="down" />
        </div>
      </div>
      <div className="flex h-[16px] shrink-0 items-center border-t border-white pr-[20px]">
        <div className="flex h-[15px] w-[17px] items-center justify-center border border-[#7fbbe8] bg-[#c3def2]"><Ic n="mapv" s={11} /></div>
        <Ic n="layout" s={11} className="ml-[3px]" />
        <div className="ml-[5px] h-[13px] w-px bg-[#888]" />
        <Ic n="refresh" s={10} className="ml-[8px]" />
        <Ic n="pause" s={8} className="ml-[8px]" />
        <div className="w-[8px]" /><Chev d="left" />
        <div className="ml-[114px] h-[14px] w-[17px] bg-[#cdcdcd]" />
        <div className="flex-1" />
        <Chev d="right" />
      </div>
      <div className="h-px bg-white" />
    </div>
  );
}

const TREE = [
  ['pl-[25px]', 0, 'fconn', 'C:\\Users\\Ngheizit\\Documents\\ArcGIS'],
  ['pl-[25px]', 0, 'fconn', 'D:\\ngheizit\\gis'],
  ['pl-[25px]', 0, 'fconn', 'D:\\ngheizit\\gis\\ESRI_competition'],
  ['pl-[25px]', 0, 'fconn', 'D:\\ngheizit\\gis\\GIS_datas'],
  ['pl-[25px]', 1, 'fconn', 'D:\\ngheizit\\unvers\\u4'],
  ['pl-[44px]', 0, 'folder', 'DoIn51'],
  ['pl-[44px]', 0, 'folder', 'GIS设计与开发'],
  ['pl-[44px]', 0, 'folder', 'img'],
  ['pl-[44px]', 0, 'folder', 'Web开发'],
  ['pl-[44px]', 1, 'folder', '测量学'],
  ['pl-[63px]', 1, 'folder', 'data'],
  ['pl-[82px]', 2, 'shp', '控制测量数据.shp'],
  ['pl-[82px]', 2, 'shp', '碎步测量数据.shp', true],
  ['pl-[63px]', 0, 'xls', '新建 Microsoft Excel 工作表.xls'],
  ['pl-[44px]', 0, 'folder', '计算机地图制图'],
  ['pl-[44px]', 0, 'folder', '软件开发工具'],
  ['pl-[25px]', 1, 'fconn', 'E:\\'],
  ['pl-[44px]', 0, 'folder', '$RECYCLE.BIN'],
  ['pl-[44px]', 0, 'folder', 'a0506'],
  ['pl-[44px]', 3, 'folder', ''],
];
const hasCjk = (t) => /[\u4e00-\u9fff]/.test(t);

function Catalog() {
  return (
    <div className="ml-[5px] flex w-[316px] flex-col">
      <Head title="Catalog" />
      <div className="mt-[2px] flex h-[22px] items-center bg-white pl-[4px]">
        <Btn n="gold" /><div className="w-[2px]" /><Drop s={8} /><div className="w-[3px]" /><Btn n="grayr" /><div className="w-[1px]" />
        <Btn n="up" /><div className="w-[1px]" /><Btn n="home" /><div className="w-[1px]" /><Btn n="dbhome" />
        <div className="w-[1px]" /><Sep /><div className="w-[4px]" /><Btn n="list" /><div className="w-[3px]" /><Drop c="#666" s={8} />
        <div className="w-[2px]" /><Sep /><div className="w-[4px]" /><Btn n="connect" />
        <Sep /><div className="w-[3px]" /><Btn n="tree" /><Sep /><div className="w-[3px]" /><Btn n="opts" />
      </div>
      <div className="flex h-[26px] shrink-0 items-center border-t border-[#ddd] bg-[#f0f0f0] pl-[2px] pr-[3px]">
        <span className="w-[52px] text-[11px] tracking-[-.1px] text-black">Location:</span>
        <div className="flex h-[22px] flex-1 items-center border border-[#777] bg-white pl-[2px] pr-[3px]">
          <Ic n="shp" s={17} /><span className="ml-[4px] flex-1 text-[12px]">碎步测量数据.shp</span>
          <Chev w={10} sw={1.2} />
        </div>
      </div>
      <div className="ml-px h-[346px] w-[312px] shrink-0 border-2 border-b-[#e3e3e3] border-l-[#777] border-r-[#e3e3e3] border-t-[#777] bg-white">
        <div className="flex h-[326px] overflow-hidden">
          <div className="w-[292px] overflow-hidden">
            {TREE.map(([pl, st, ic, t, hot], k) => (
              <div key={k} className={`flex h-[17px] items-center whitespace-pre ${pl}`}>
                {st < 2 ? <Exp open={st === 1} /> : <span className="w-[9px]" />}
                <Ic n={ic} s={16} className={st === 2 ? 'ml-[6px] mr-[3px]' : 'ml-[6px] mr-[5px]'} />
                <span className={`leading-[17px] ${hasCjk(t) ? (t.includes('Excel') ? 'tracking-[.24px]' : t.includes('.shp') ? 'ml-[2px] tracking-[.1px]' : 'tracking-[.1px]') : 'tracking-[.28px]'} ${hot ? 'h-[17px] bg-[#efefef]' : ''}`}>{t}</span>
              </div>
            ))}
          </div>
          <div className="flex flex-1 flex-col items-center bg-[#f0f0f0] pb-[3px] pt-[5px]">
            <Chev d="up" />
            <div className="mt-[10px] h-[44px] w-[15px] bg-[#cdcdcd]" />
            <div className="flex-1" />
            <Chev d="down" />
          </div>
        </div>
        <div className="flex h-[16px] items-center bg-[#f0f0f0] pl-[2px]">
          <Chev d="left" /><div className="ml-[5px] h-[15px] w-[211px] bg-[#cdcdcd]" /><div className="w-[51px]" /><Chev d="right" />
        </div>
      </div>
      <div className="ml-px mt-[4px] h-[197px] w-[312px] shrink-0 border-2 border-b-[#e3e3e3] border-l-[#777] border-r-[#e3e3e3] border-t-[#777] bg-white pl-[9px] pt-[11px] text-black">
        <div className="flex h-[12px] items-center font-['Liberation_Mono','Noto_Sans_CJK_SC',monospace] text-[10px]">
          <span className="w-[50px]">Name:</span><b className="whitespace-pre text-[12px] tracking-[0px]"><span className="tracking-[1px]">碎步测量数据</span>.shp</b>
        </div>
        <div className="flex h-[12px] items-center font-['Liberation_Mono','Noto_Sans_CJK_SC',monospace] text-[10px]">
          <span className="w-[50px]">Type:</span><b className="text-[12px]">Shapefile</b>
        </div>
        <div className="mt-[9px] flex h-[133px] w-[200px] flex-col items-center border-b-2 border-l border-r-2 border-t border-b-[#707070] border-l-[#e8e8e8] border-r-[#707070] border-t-[#e8e8e8] bg-[#f0f0f0] pl-px pt-[49px]">
          <svg width="32" height="32" viewBox="0 0 16 16">
            <rect x=".3" y="1.700" width="15.300" height="12.400" rx="1" fill="#dcebac" stroke="#53683f" strokeWidth=".6" />
            <path d="M1 2.500h13.500M1 2.500v10" stroke="#f2f9d6" strokeWidth=".7" fill="none" />
            <path d="M1 13.600h14V3" stroke="#8ca263" strokeWidth=".6" fill="none" />
            <circle cx="5" cy="5.700" r=".95" fill="#1c2b0e" /><circle cx="11" cy="6.800" r=".95" fill="#1c2b0e" /><circle cx="7" cy="10.500" r=".95" fill="#1c2b0e" />
          </svg>
          <span className="mt-[31px] h-[19px] whitespace-nowrap border-b border-r border-[#777] bg-[#ffffe1] pl-[4px] pr-[3px] text-[12px] leading-[18px] tracking-[.08px]">碎步测量数据.shp</span>
        </div>
      </div>
      <div className="ml-[3px] mt-[4px] flex h-[20px] shrink-0">
        <div className="flex w-[72px] items-center rounded-b-[3px] border border-t-0 border-[#999] bg-white pl-[3px]"><Ic n="catw" /><span className="ml-[3px] text-[13px]">Catalog</span></div>
        <div className="flex w-[68px] items-center rounded-b-[3px] border border-l-0 border-t-0 border-[#aaa] bg-[#f0f0f0] pl-[5px]"><Ic n="srchw" /><span className="ml-[3px] text-[12.5px] text-[#777]">Search</span></div>
      </div>
    </div>
  );
}

const TOOLS = ['3D Analyst', 'Analysis', 'Cartography', 'Conversion', 'Data Interoperability', 'Data Management', 'Editing', 'Geocoding', 'Geostatistical Analyst', 'Linear Referencing', 'Multidimension', 'Network Analyst', 'Parcel Fabric', 'Schematics', 'Server', 'Spatial Analyst', 'Spatial Statistics', 'Tracking Analyst'];

function Toolbox() {
  return (
    <div className="ml-[5px] flex w-[330px] flex-col tracking-[.26px]">
      <Head title="ArcToolbox" />
      <div className="mt-[1px] flex flex-1 flex-col border border-[#828790] bg-white">
        <Row pl="pl-[5px]"><Ic n="toolroot" className="mr-[4px]" /><span className="text-[12.3px]">ArcToolbox</span></Row>
        {TOOLS.map((t) => (
          <Row key={t} pl="pl-[8px]"><Exp /><Ic n="toolbox" s={17} className="ml-[5px] mr-[5px]" />{t} Tools</Row>
        ))}
      </div>
    </div>
  );
}

const MENU = [['File', 'w-[35px]'], ['Edit', 'w-[38px]'], ['View', 'w-[43px]'], ['Bookmarks', 'w-[83px]'], ['Insert', 'w-[49px]'], ['Selection', 'w-[68px]'], ['Geoprocessing', 'w-[104px]'], ['Customize', 'w-[76px]'], ['Windows', 'w-[69px]'], ['Help', '']];

export default function App() {
  return (
    <div className="flex h-[768px] w-[1366px] flex-col overflow-hidden bg-[#f5f5f5] font-['Open_Sans','Noto_Sans_CJK_SC',sans-serif] text-[12px] text-[#111]">
      <div className="flex h-[23px] shrink-0 items-center bg-[#2c7b99] pl-[2px] text-[12.5px] text-white">
        <Ic n="app" /><span className="ml-[5px] flex-1 pt-px tracking-[.2px]">无标题 - ArcMap</span>
        <svg width="110" height="12" fill="none" stroke="#fff" className="mb-[2px] mr-[12px]">
          <path d="M1 6.500h9M46.500 3.500h7v7h-7zM48.500 3.500v-2h7v7h-2M92 2l9 9M101 2l-9 9" />
        </svg>
      </div>
      <div className="flex h-[27px] shrink-0 items-center bg-[#f3f3f3] pl-[12px] pt-[2px] text-[12.5px] text-black">
        {MENU.map(([t, w]) => <span key={t} className={`shrink-0 ${w}`}>{t}</span>)}
      </div>
      <div className="flex h-[26px] shrink-0 items-center">
        <div className="flex h-[25px] items-center bg-gradient-to-b from-[#fcfcfc] to-[#ededed]">
          <Grip /><Btn n="new" /><Btn n="open" /><Btn n="save" /><Btn n="print" /><Sep />
          <Btn n="cut" /><Btn n="copy" /><Btn n="paste" /><Btn n="del" /><Sep /><Btn n="undo" /><Btn n="redo" /><Sep />
          <Btn n="add" /><Drop /><div className="w-[1px]" /><Sep />
          <div className="flex h-[20px] w-[148px] items-center border border-[#707070] bg-white pl-[2px] pr-[3px] font-['Liberation_Mono',monospace] text-[11px] tracking-[-.45px] text-black">
            <span className="flex-1">1:1,000</span><Chev w={10} sw={1.2} />
          </div>
          <Sep /><Btn n="edit" /><Sep /><Btn n="tocw" /><Btn n="catw" /><Btn n="srchw" /><Btn n="toolw" /><Btn n="pyw" /><Sep /><Btn n="model" /><Btn n="cat" /><div className="w-[2px]" /><More />
        </div>
        <div className="ml-[3px] flex h-[25px] items-center bg-gradient-to-b from-[#fcfcfc] to-[#ededed]">
          <div className="-ml-[4px]"><Grip /></div><Btn n="zin" /><Btn n="zout" /><Btn n="hand" on /><Btn n="globe" /><div className="w-px" /><Sep />
          <Btn n="fin" /><Btn n="fout" /><Sep /><Btn n="back" /><Btn n="fwd" /><Sep /><Btn n="selF" /><Drop /><div className="w-px" /><Btn n="clr" /><Sep /><Btn n="ptr" /><Sep />
          <Btn n="info" /><Btn n="bolt" /><Btn n="popup" /><Sep /><Btn n="meas" /><Sep /><Btn n="bino" /><Btn n="route" /><Btn n="xy" /><Sep /><Btn n="time" /><Sep /><Btn n="viewer" /><div className="w-[2px]" /><More />
        </div>
      </div>
      <div className="flex h-[26px] shrink-0 items-center">
        <div className="flex h-[25px] items-center bg-gradient-to-b from-[#fcfcfc] to-[#ededed]">
          <Grip /><Btn n="pzin" /><Btn n="pzout" /><Btn n="phand" /><Btn n="pfull" /><Btn n="one" /><Sep />
          <Btn n="pin" /><Btn n="pout" /><Sep /><Btn n="pback" /><Btn n="pfwd" />
          <div className="flex h-[20px] w-[60px] items-center border border-[#c4c4c4] bg-white p-[2px] pr-[3px] font-['Liberation_Mono',monospace] text-[11px] tracking-[-.6px] text-[#555]">
            <span className="h-[13px] w-[37px] bg-[#f0f0f0] leading-[13px]">100%</span><span className="flex-1" /><Chev w={10} sw={1.2} c="#aaa" />
          </div>
          <Sep /><div className="flex h-[22px] w-[22px] items-center justify-center border border-[#9db8cf] bg-[#e6edf3]"><Ic n="draft" /></div>
          <Btn n="focus" /><Btn n="swap" /><Btn n="ddp" /><div className="w-[2px]" /><More />
        </div>
      </div>
      <div className="flex h-[644px] shrink-0">
        <Contents />
        <MapView />
        <Catalog />
        <Toolbox />
        <div className="ml-[2px] mt-[3px] flex h-[70px] w-[21px] shrink-0 flex-col items-center rounded-l-[3px] border border-[#999] bg-[#f0f0f0] pt-[3px]">
          <Ic n="hammer" />
          <span className="mt-[3px] font-['Liberation_Mono',monospace] text-[10px] leading-[12px] text-[#555] [writing-mode:vertical-rl]">Results</span>
        </div>
      </div>
      <div className="flex-1 bg-[#f0f0f0]"><div className="ml-[932px] h-full border-l border-t border-[#f8f8f8]" /></div>
      <div className="h-[2px] shrink-0 bg-[#43545f]" />
    </div>
  );
}
